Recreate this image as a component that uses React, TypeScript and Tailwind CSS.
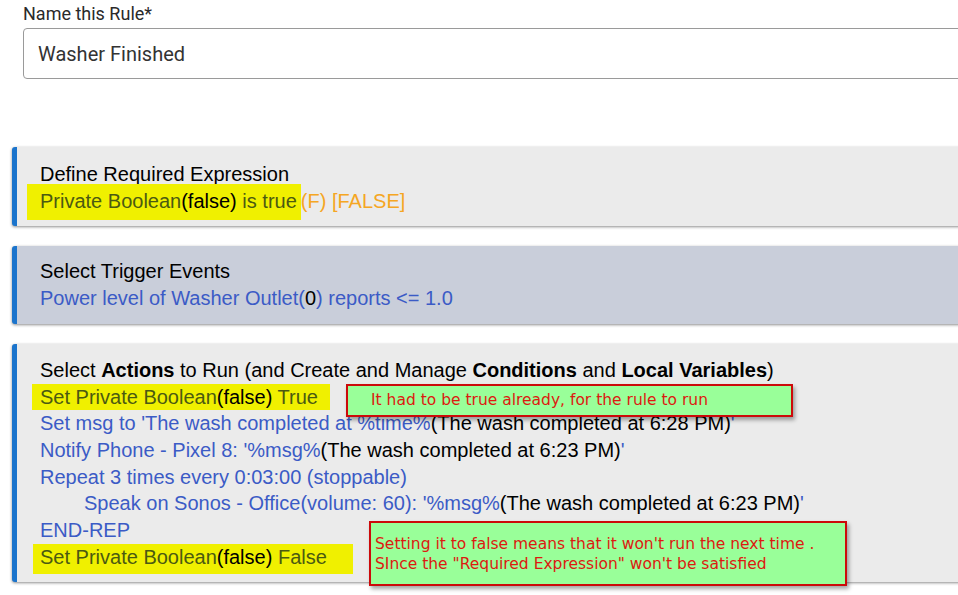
import type { ReactNode } from "react";

const BLUE = "text-[#3b5bc6]";
const OLIVE = "text-[#4b5a12]";

function Section({ tone, pad, children }: { tone: string; pad: string; children: ReactNode }) {
  return (
    <div className={`${tone} ${pad} ml-3 border-l-[5px] border-[#1b74cc] rounded-l-[3px] shadow-[0_1px_3px_rgba(0,0,0,0.45)] pl-[23px] text-[20px] leading-[26.7px] text-black`}>
      {children}
    </div>
  );
}

function Mark({ className, children }: { className: string; children: ReactNode }) {
  return <span className={`bg-[#f0f000] ${className}`}>{children}</span>;
}

function Callout({ className, children }: { className: string; children: ReactNode }) {
  return (
    <div
      className={`absolute bg-[#99ff99] border-2 border-[#cc0a0a] shadow-[2px_3px_4px_rgba(0,0,0,0.35)] text-[#dd1a10] text-[15.5px] leading-[20px] ${className}`}
      style={{ fontFamily: '"DejaVu Sans", Verdana, sans-serif' }}
    >
      {children}
    </div>
  );
}

export default function App() {
  return (
    <div className="w-[958px] h-[595px] overflow-hidden bg-white relative" style={{ fontFamily: '"Liberation Sans", Arial, sans-serif' }}>
      <div className="w-[1000px]">
        <div className="pl-[23px] pt-[2px]" style={{ fontFamily: "Roboto, sans-serif" }}>
          <div className="text-[18px] leading-[24px] text-[#2a2a2a]">Name this Rule*</div>
          <div className="mt-[2px] h-[51px] border border-[#9a9a9a] rounded-[4px] flex items-center pl-[14px] text-[20px] text-[#333]">
            Washer Finished
          </div>
        </div>

        <div className="mt-[68px] flex flex-col gap-5">
          <Section tone="bg-[#ebebeb]" pad="pt-[14px] pb-[12px]">
            <div>Define Required Expression</div>
            <div>
              <Mark className="-ml-[13px] pl-[13px] pr-[4px] pt-[6px] pb-[8px]">
                <span className={OLIVE}>Private Boolean</span>(false)<span className={OLIVE}> is true</span>
              </Mark>
              <span className="text-[#f5a623]">(F) [FALSE]</span>
            </div>
          </Section>

          <Section tone="bg-[#c9ceda]" pad="py-[12px]">
            <div>Select Trigger Events</div>
            <div className={BLUE}>
              Power level of Washer Outlet(<span className="text-black">0</span>) reports &lt;= 1.0
            </div>
          </Section>

          <Section tone="bg-[#ebebeb]" pad="pt-[13px] pb-[12px]">
            <div>
              Select <b>Actions</b> to Run (and Create and Manage <b>Conditions</b> and <b>Local Variables</b>)
            </div>
            <div>
              <Mark className="-ml-[8px] pl-[8px] pr-[12px] py-[2px]">
                <span className={OLIVE}>Set Private Boolean</span>(false)<span className={OLIVE}> True</span>
              </Mark>
            </div>
            <div className={BLUE}>
              Set msg to 'The wash completed at %time%<span className="text-black">(The wash completed at 6:28 PM)</span>'
            </div>
            <div className={BLUE}>
              Notify Phone - Pixel 8: '%msg%<span className="text-black">(The wash completed at 6:23 PM)</span>'
            </div>
            <div className={BLUE}>Repeat 3 times every 0:03:00 (stoppable)</div>
            <div className={`${BLUE} pl-[44px]`}>
              Speak on Sonos - Office(volume: 60): '%msg%<span className="text-black">(The wash completed at 6:23 PM)</span>'
            </div>
            <div className={BLUE}>END-REP</div>
            <div>
              <Mark className="-ml-[7px] pl-[7px] pr-[26px] pt-[2px] pb-[6px]">
                <span className={OLIVE}>Set Private Boolean</span>(false)<span className={OLIVE}> False</span>
              </Mark>
            </div>
          </Section>
        </div>
      </div>

      <Callout className="left-[346px] top-[384px] w-[447px] h-[33px] pl-[23px] pt-[4px]">
        It had to be true already, for the rule to run
      </Callout>
      <Callout className="left-[369px] top-[521px] w-[478px] h-[65px] pl-[4px] pt-[11px]">
        <div>Setting it to false means that it won't run the next time .</div>
        <div>SInce the "Required Expression" won't be satisfied</div>
      </Callout>
    </div>
  );
}
